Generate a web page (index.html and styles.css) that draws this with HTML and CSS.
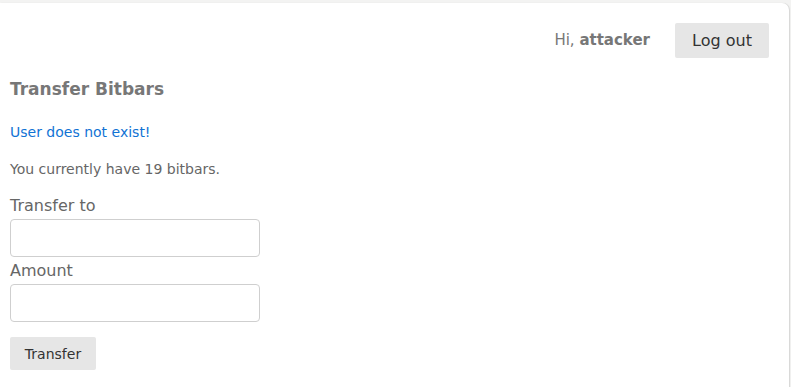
FILE: index.html
```html
<!DOCTYPE html>
<html lang="en">
<head>
<meta charset="utf-8">
<title>Transfer Bitbars</title>
<link rel="stylesheet" href="styles.css">
</head>
<body>
<main class="card">
  <header class="topbar">
    <span class="greet">Hi, <b>attacker</b></span>
    <button class="btn logout" type="button">Log out</button>
  </header>
  <h2 class="title">Transfer Bitbars</h2>
  <p class="error">User does not exist!</p>
  <p class="balance">You currently have 19 bitbars.</p>
  <form class="form">
    <label class="label" for="to">Transfer to</label>
    <input class="field" id="to" type="text">
    <label class="label" for="amt">Amount</label>
    <input class="field" id="amt" type="text">
    <button class="btn submit" type="button">Transfer</button>
  </form>
</main>
</body>
</html>
```
FILE: styles.css
```css
* { box-sizing: border-box; }
html, body { margin: 0; height: 100%; }
body {
  background: #f3f3f2;
  font-family: "DejaVu Sans", "Open Sans", sans-serif;
  color: #666;
  overflow: hidden;
  padding-top: 3px;
  padding-right: 2px;
}
.card {
  background: #fff;
  border-top-right-radius: 7px;
  box-shadow: 1px 0 1px rgba(0,0,0,0.12);
  height: 400px;
  padding: 20px 20px 0 10px;
}
.topbar {
  display: flex;
  justify-content: flex-end;
  align-items: center;
  gap: 25px;
}
.greet {
  font-size: 15px;
  color: #777;
  margin-top: -2px;
}
.greet b { color: #777; }
.btn {
  font-family: inherit;
  background: #e6e6e6;
  border: none;
  border-radius: 2px;
  color: #333;
  cursor: pointer;
}
.logout {
  width: 94px;
  height: 35px;
  font-size: 16px;
}
.title {
  margin: 20px 0 0;
  font-size: 17px;
  font-weight: bold;
  color: #777;
  line-height: 22px;
}
.error {
  margin: 23px 0 0;
  font-size: 14px;
  line-height: 18px;
  color: #1173d4;
}
.balance {
  margin: 19px 0 0;
  font-size: 14px;
  line-height: 18px;
  color: #666;
}
.form {
  display: flex;
  flex-direction: column;
  align-items: flex-start;
  margin-top: 18px;
}
.label {
  font-size: 16px;
  line-height: 20px;
  color: #666;
  margin-bottom: 3px;
}
.field {
  width: 250px;
  height: 38px;
  border: 1px solid #cfcfcf;
  border-radius: 4px;
  margin-bottom: 4px;
  font-size: 14px;
}
.submit {
  margin-top: 11px;
  width: 86px;
  height: 33px;
  font-size: 14px;
}
```
